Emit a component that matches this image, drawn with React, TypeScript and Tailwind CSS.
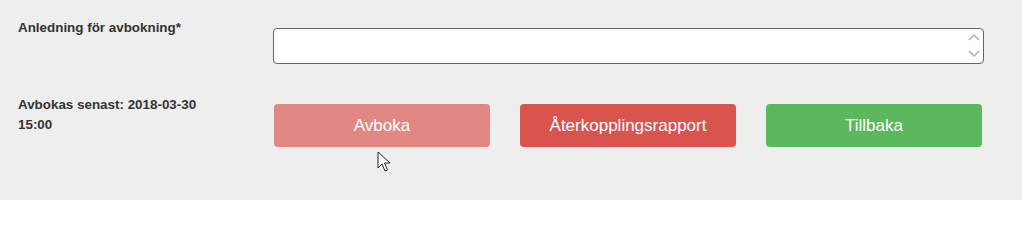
import React from 'react'

function Cursor() {
    return (
        <svg className="absolute left-[377px] top-[151px]" width="14" height="22" viewBox="0 0 14 22">
            <path d="M1 1 L1 17 L5 13 L8 20 L10.5 19 L7.5 12 L13 12 Z" fill="#fff" stroke="#222" strokeWidth="1" strokeLinejoin="round" />
        </svg>
    )
}

export default function App() {
    const labelCls = "w-[255px] shrink-0 pl-[18px] text-[13.4px] leading-[20px] font-bold text-[#333]"
    const btnCls = "w-[216px] h-[43px] rounded-[4px] text-white text-[17px] flex items-center justify-center"

    return (
        <div className="relative w-[1022px] h-[200px] bg-[#eeeeee] font-['Liberation_Sans',Arial,sans-serif] overflow-hidden">
            {/* Reason */}
            <div className="flex pt-[16px]">
                <div className={labelCls + " pt-[2px]"}>Anledning för avbokning*</div>
                <div className="pl-[18px] pt-[12px]">
                    <div className="relative w-[711px] h-[36px] bg-white border border-[#666] rounded-[4px]">
                        <textarea className="w-full h-full resize-none bg-transparent outline-none px-2 py-1 text-sm" />
                        <div className="absolute right-[2px] top-[2px] flex flex-col gap-[3px] text-[#b0b0b0]">
                            <svg width="14" height="13" viewBox="0 0 14 13"><path d="M2 9 L7 4 L12 9" fill="none" stroke="currentColor" strokeWidth="1.5" /></svg>
                            <svg width="14" height="13" viewBox="0 0 14 13"><path d="M2 4 L7 9 L12 4" fill="none" stroke="currentColor" strokeWidth="1.5" /></svg>
                        </div>
                    </div>
                </div>
            </div>

            {/* Deadline + actions */}
            <div className="flex pt-[30px]">
                <div className={labelCls + " pt-[1px]"}>
                    Avbokas senast: 2018-03-30<br />15:00
                </div>
                <div className="pl-[19px] pt-[10px] flex gap-[30px]">
                    <button className={btnCls + " bg-[#e28884]"}>Avboka</button>
                    <button className={btnCls + " bg-[#d9534f]"}>Återkopplingsrapport</button>
                    <button className={btnCls + " bg-[#5cb85c] w-[215px]"}>Tillbaka</button>
                </div>
            </div>

            <Cursor />
        </div>
    )
}
